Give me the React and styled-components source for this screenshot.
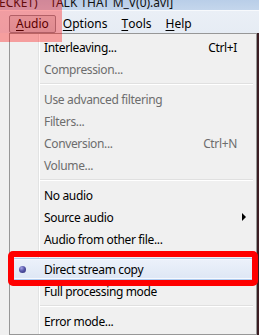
import React from "react";
import styled, { createGlobalStyle } from "styled-components";

const GlobalStyle = createGlobalStyle`
  html, body {
    margin: 0;
    padding: 0;
  }
  body {
    width: 259px;
    height: 335px;
    overflow: hidden;
    background: #f0f0f0;
    font-family: "Noto Sans", "Liberation Sans", sans-serif;
    font-size: 12px;
    letter-spacing: -0.35px;
    color: #000;
  }
`;

const Window = styled.div`
  position: relative;
  width: 259px;
  height: 335px;
  overflow: hidden;
  display: flex;
  flex-direction: column;
`;

const TitleBar = styled.div`
  height: 10px;
  flex: none;
  overflow: hidden;
  display: flex;
  white-space: nowrap;
  background: linear-gradient(#b9cee8, #c4d6ec);
`;

const TitleText = styled.span`
  margin-top: -4px;
  margin-left: -1px;
  line-height: 14px;
  color: #111;
  letter-spacing: 0;
`;

const MenuBar = styled.div`
  height: 22px;
  flex: none;
  display: flex;
  align-items: center;
  padding-left: 9px;
  border-top: 1px solid #f7f9fc;
  background: linear-gradient(#eaeff6, #e6ecf4);
`;

const BarItem = styled.div`
  height: 18px;
  box-sizing: border-box;
  display: flex;
  align-items: center;
  padding: 0 6px;
  margin-top: 3px;
  border: 1px solid ${(p) => (p.$pressed ? "#8a909b" : "transparent")};
  border-radius: 2px;
  background: ${(p) => (p.$pressed ? "linear-gradient(#d9dde4, #cdd2db)" : "none")};
  color: #000;
  letter-spacing: 0;
`;

const Key = styled.span`
  text-decoration: underline;
  text-underline-offset: 2px;
`;

const Body = styled.div`
  flex: 1;
  display: flex;
  align-items: flex-start;
`;

const LeftEdge = styled.div`
  width: 9px;
  align-self: stretch;
  background: #f0f0f0;
`;

const Video = styled.div`
  flex: 1;
  align-self: stretch;
  background: #3a1d22;
`;

const Menu = styled.div`
  width: 248px;
  box-sizing: border-box;
  padding: 2px;
  border: 1px solid #979797;
  background:
    linear-gradient(
      to right,
      transparent 28px,
      #e2e3e3 28px,
      #e2e3e3 29px,
      #ffffff 29px,
      #ffffff 30px,
      transparent 30px
    ),
    #f0f0f0;
  box-shadow: 2px 2px 2px rgba(0, 0, 0, 0.3);
`;

const Row = styled.div`
  position: relative;
  height: 22px;
  box-sizing: border-box;
  display: flex;
  align-items: center;
  padding-right: 8px;
  color: ${(p) => (p.$disabled ? "#6d6d6d" : "#000")};
  border-radius: 3px;
  background: ${(p) =>
    p.$active ? "linear-gradient(#edf2fb, #dde6f4)" : "transparent"};
  box-shadow: ${(p) =>
    p.$active ? "inset 0 0 0 1px #aecbef, inset 0 0 0 2px #f6f9fe" : "none"};
`;

const Gutter = styled.div`
  width: 32px;
  flex: none;
  display: flex;
  align-items: center;
  padding-left: 7px;
  box-sizing: border-box;
`;

const Bullet = styled.span`
  width: 7px;
  height: 7px;
  border-radius: 50%;
  background: radial-gradient(circle at 35% 30%, #a4a4e6 0, #5656a8 45%, #2b2b72 100%);
`;

const Label = styled.span`
  flex: 1;
  white-space: nowrap;
`;

const Shortcut = styled.span`
  margin-right: 9px;
  color: ${(p) => (p.$disabled ? "#6d6d6d" : "#000")};
`;

const Arrow = styled.span`
  width: 0;
  height: 0;
  border-left: 4px solid #000;
  border-top: 4px solid transparent;
  border-bottom: 4px solid transparent;
`;

const Separator = styled.div`
  height: 8px;
  display: flex;
  align-items: center;
  padding-left: 28px;
  padding-right: 1px;

  &::after {
    content: "";
    flex: 1;
    height: 2px;
    box-sizing: border-box;
    border-top: 1px solid #e0e0e0;
    border-bottom: 1px solid #ffffff;
  }
`;

const RedFrame = styled.div`
  position: absolute;
  top: -7px;
  left: -4px;
  right: -4px;
  bottom: -6px;
  border: 6px solid #ff0000;
  border-radius: 5px;
  pointer-events: none;
  z-index: 2;
`;

const PinkMark = styled.div`
  position: absolute;
  top: 0;
  left: 0;
  width: 62px;
  height: 42px;
  background: rgba(255, 0, 0, 0.34);
  z-index: 3;
`;

const items = [
  { label: "Interleaving...", shortcut: "Ctrl+I" },
  { label: "Compression...", disabled: true },
  { sep: true },
  { label: "Use advanced filtering", disabled: true },
  { label: "Filters...", disabled: true },
  { label: "Conversion...", shortcut: "Ctrl+N", disabled: true },
  { label: "Volume...", disabled: true },
  { sep: true },
  { label: "No audio" },
  { label: "Source audio", submenu: true },
  { label: "Audio from other file..." },
  { sep: true },
  { label: "Direct stream copy", checked: true, active: true },
  { label: "Full processing mode" },
  { sep: true },
  { label: "Error mode..." },
];

const menus = [
  { key: "A", rest: "udio", pressed: true },
  { key: "O", rest: "ptions" },
  { key: "T", rest: "ools" },
  { key: "H", rest: "elp" },
];

export default function App() {
  return (
    <>
      <GlobalStyle />
      <Window>
        <TitleBar>
          <TitleText>ECKET)&nbsp;&nbsp;&nbsp; TALK THAT M_V(0).avi]</TitleText>
        </TitleBar>
        <MenuBar>
          {menus.map((m) => (
            <BarItem key={m.key} $pressed={m.pressed}>
              <Key>{m.key}</Key>
              {m.rest}
            </BarItem>
          ))}
        </MenuBar>
        <Body>
          <LeftEdge />
          <Menu>
            {items.map((it, i) =>
              it.sep ? (
                <Separator key={i} />
              ) : (
                <Row key={i} $disabled={it.disabled} $active={it.active}>
                  <Gutter>{it.checked && <Bullet />}</Gutter>
                  <Label>{it.label}</Label>
                  {it.shortcut && (
                    <Shortcut $disabled={it.disabled}>{it.shortcut}</Shortcut>
                  )}
                  {it.submenu && <Arrow />}
                  {it.active && <RedFrame />}
                </Row>
              )
            )}
          </Menu>
          <Video />
        </Body>
        <PinkMark />
      </Window>
    </>
  );
}
